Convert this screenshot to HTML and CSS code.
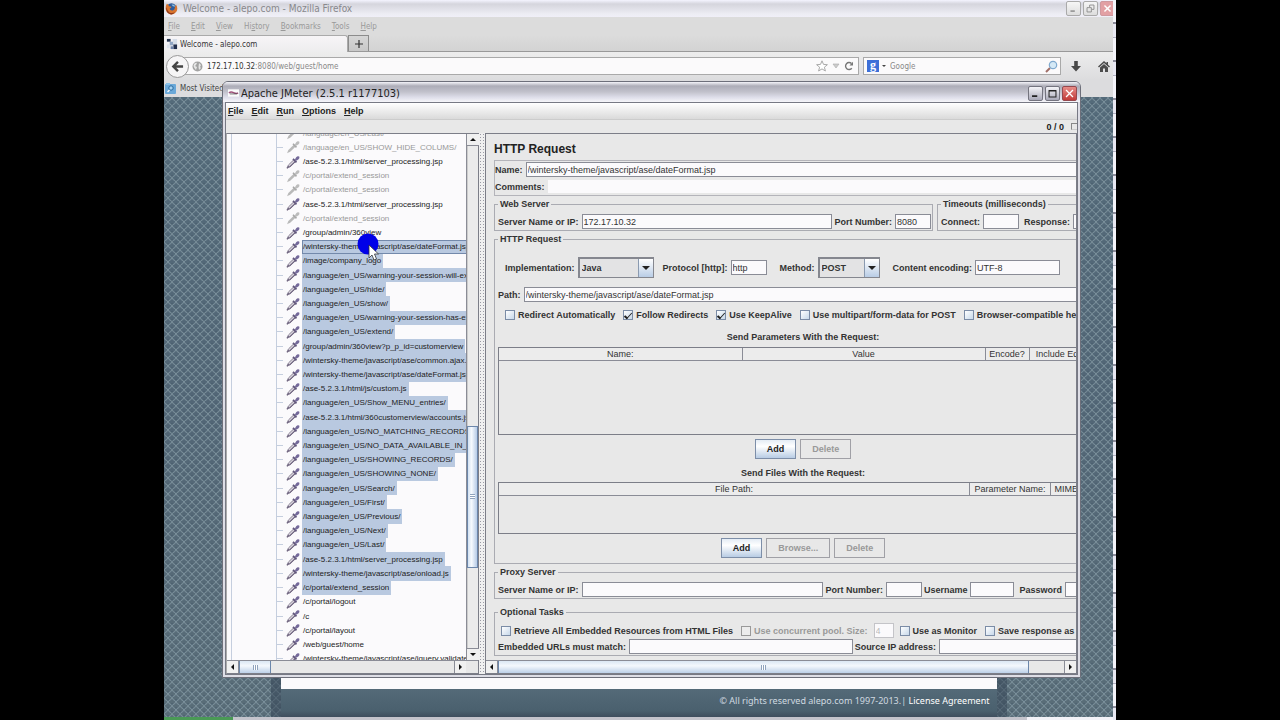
FILE: index.html
```html
<!DOCTYPE html>
<html lang="en">
<head>
<meta charset="utf-8">
<title>Apache JMeter (2.5.1 r1177103)</title>
<link rel="stylesheet" href="styles.css">
</head>
<body>
<svg class="defs" width="0" height="0" aria-hidden="true">
  <symbol id="dropper" viewBox="0 0 14 14">
    <path d="M1 13.2 2.4 10 7.8 4.8 9.6 6.5 4.2 11.8Z" fill="#d9d4dc" stroke="#8f8799" stroke-width="1"/>
    <path d="M1 13.2 3 11.2M3.6 11.9 9.4 6.4" stroke="#6f6580" stroke-width="1.1"/>
    <path d="M7 3.8 10.5 7.4" stroke="#61567c" stroke-width="1.8"/>
    <path d="M8.8 4.6 10.2 2.2Q11.6.6 13.2 1.6 14 3 12.6 4.3L10.4 5.8Z" fill="#74699a"/>
  </symbol>
  <symbol id="dropper-off" viewBox="0 0 14 14">
    <path d="M1 13.2 2.4 10 8 4.4 10 6.3 4.2 11.8Z" fill="#b9b9b9"/>
    <path d="M7 3.8 10.5 7.4" stroke="#a8a8a8" stroke-width="1.6"/>
    <path d="M8.8 4.6 10.2 2.2Q11.6.6 13.2 1.6 14 3 12.6 4.3L10.4 5.8Z" fill="#bcbcbc"/>
  </symbol>
</svg>
<main class="desktop">
  <section class="firefox">
    <header class="ff-title">
      <svg class="ff-logo" viewBox="0 0 14 14"><circle cx="7" cy="7" r="5.6" fill="#2f5c9c"/><path d="M7 3Q10 2 11 5 8 5 7 3Z" fill="#8fc0e0"/><path d="M2 2Q4 3 4.4 4.6L7 5Q6.6 6.6 5 7 5.4 9.6 8.4 9.2 11 8.6 10.6 5.4L12 3Q14.4 7 12.2 10.6 9.6 14 5.8 13.2 1.2 12 .7 7.4.6 4 2 2Z" fill="#d9742e"/><path d="M2 5Q1.6 9 4.6 11.2 8 13 11 10.6 8 15 4 12.4 0 9.6 2 5Z" fill="#8f3a1c"/></svg>
      <h1>Welcome - alepo.com - Mozilla Firefox</h1>
      <div class="win-buttons faded">
        <button aria-label="Minimize Firefox"><svg viewBox="0 0 15 15"><path d="M4 10.5h5" stroke="#999" stroke-width="2"/></svg></button>
        <button aria-label="Restore Firefox"><svg viewBox="0 0 15 15"><path d="M6.5 6V3.500h5v5h-2.500M3.500 6.500h5v5h-5z" fill="none" stroke="#888"/></svg></button>
        <button class="close" aria-label="Close Firefox"><svg viewBox="0 0 15 15"><path d="M4 4l7 7M11 4l-7 7" stroke="#fff" stroke-width="1.700"/></svg></button>
      </div>
    </header>
    <nav class="ff-menu"><a href="#"><u>F</u>ile</a><a href="#"><u>E</u>dit</a><a href="#"><u>V</u>iew</a><a href="#">Hi<u>s</u>tory</a><a href="#"><u>B</u>ookmarks</a><a href="#"><u>T</u>ools</a><a href="#"><u>H</u>elp</a></nav>
    <div class="ff-tabs">
      <div class="ff-tab"><svg class="site-icon" viewBox="0 0 13 13"><path d="M1 1h4v3H1z" fill="#24344f"/><path d="M4 4h4v4H4z" fill="#8fa5c4"/><path d="M7 1h5v6H8z" fill="#d5dde9"/><path d="M8 7h4v5H8z" fill="#1e2c4c"/><path d="M1 7h3v4H1z" fill="#dbe2ec"/><path d="M5 9h3v3H5z" fill="#6d83ab"/></svg>Welcome - alepo.com</div>
      <button class="ff-newtab" aria-label="New tab"><svg viewBox="0 0 8 8"><path d="M4 0v8M0 4h8" stroke="#333" stroke-width="1.200"/></svg></button>
    </div>
    <div class="ff-nav">
      <button class="ff-back" aria-label="Back"><svg viewBox="0 0 14 14"><path d="M13 7H3M7.500 2 2.500 7l5 5" fill="none" stroke="#444" stroke-width="2.600"/></svg></button>
      <div class="ff-url">
        <svg class="globe" viewBox="0 0 11 11"><circle cx="5.500" cy="5.500" r="5" fill="#a3a3a3"/><path d="M2 3q2-2 3-1l-1 2-1 1 2 1-1 3Q2 7 1.500 5zM7 2l2 2-1 2 1 1-2 2-.5-3z" fill="#e6e6e6"/></svg>
        <span class="url-text"><span>172.17.10.32</span>:8080/web/guest/home</span>
        <svg class="star" viewBox="0 0 12 12"><path d="M6 .8 7.500 4.400l3.900.3-3 2.500 1 3.800L6 8.900 2.600 11l1-3.800-3-2.500 3.900-.3z" fill="#fff" stroke="#aaa"/></svg>
        <svg class="down" viewBox="0 0 8 6"><path d="M1 1h6L4 5z" fill="#ccc" stroke="#aaa" stroke-width=".6"/></svg>
        <svg class="reload" viewBox="0 0 10 10"><path d="M7.800 7.200A3.500 3.500 0 1 1 7.500 2.500" fill="none" stroke="#777" stroke-width="1.400"/><path d="M5.500 4.500h3.500V.8z" fill="#777"/></svg>
      </div>
      <div class="ff-search">
        <span class="g-badge">g</span><span class="caret"></span>
        <input aria-label="Search with Google" placeholder="Google">
        <svg class="lens" viewBox="0 0 13 13"><path d="M1 12 5 8" stroke="#a06f68" stroke-width="2"/><circle cx="8" cy="5" r="3.700" fill="#d4e9f6" stroke="#7fa9cf" stroke-width="1.200"/></svg>
      </div>
      <svg class="download" viewBox="0 0 10 11"><path d="M3.200 0h3.600v5H10L5 10.500 0 5h3.200z" fill="#484848"/></svg>
      <svg class="home" viewBox="0 0 12 11"><path d="M6 0 0 5.600l1 .9L6 2l5 4.500 1-.9-2-1.900V1H8.500v1.300z" fill="#4c4c4c"/><path d="M2 6.500 6 3l4 3.500V11H7V7.500H5V11H2z" fill="#4c4c4c"/></svg>
    </div>
    <div class="ff-bookmarks"><svg viewBox="0 0 11 11"><rect x="0" y="1" width="11" height="10" rx="1" fill="#6aa8d8"/><path d="M1 0h4v2H1z" fill="#88c0e8"/><circle cx="6" cy="5" r="2.200" fill="#a8d4f2" stroke="#29689e"/><path d="M2.500 9 4.500 7" stroke="#fff" stroke-width="1.300"/></svg>Most Visited</div>
    <div class="ff-page">
      <svg class="scales" width="100%" height="100%" aria-hidden="true">
        <defs>
          <linearGradient id="tint" x1="0" y1="0" x2="0" y2="1"><stop offset="0" stop-color="#546b7a"/><stop offset=".5" stop-color="#526676"/><stop offset="1" stop-color="#596d78"/></linearGradient>
          <pattern id="scale" width="8" height="8" patternUnits="userSpaceOnUse"><path d="M0 0Q.5 3.500 4 4 7.500 3.500 8 0M-4 4Q-3.500 7.500 0 8 3.500 7.500 4 4 4.500 7.500 8 8" fill="none" stroke="#8297a2" stroke-width=".9"/><path d="M4 4V2M0 8V6M8 8V6" stroke="#465a6a"/></pattern>
        </defs>
        <rect width="100%" height="100%" fill="url(#tint)"/><rect width="100%" height="100%" fill="url(#scale)"/>
      </svg>
      <div class="page-shade">
        <footer class="page-footer">© All rights reserved alepo.com 1997-2013.| <a href="#">License Agreement</a></footer>
      </div>
    </div>
    <div class="taskbar"><span class="start"></span><span class="tasks"></span><span class="tray"></span></div>
  </section>
  <div class="edge"></div>

  <section class="jmeter">
    <header class="jm-title">
      <svg class="jm-logo" viewBox="0 0 12 8"><rect width="12" height="8" fill="#fafafa"/><path d="M1 4Q3 2 6 3.500T11 4" fill="none" stroke="#a0527c" stroke-width="1.600"/><path d="M2 5h8" stroke="#444" stroke-width=".8"/></svg>
      <h2>Apache JMeter (2.5.1 r1177103)</h2>
      <div class="win-buttons">
        <button aria-label="Minimize"><svg viewBox="0 0 15 15"><path d="M3.500 10.500h6" stroke="#222" stroke-width="2"/></svg></button>
        <button aria-label="Maximize"><svg viewBox="0 0 15 15"><path d="M3.500 4.500h8v7h-8zM3 4h9" fill="none" stroke="#222" stroke-width="1.200"/></svg></button>
        <button class="close" aria-label="Close"><svg viewBox="0 0 15 15"><path d="M3.500 3.500l8 8M11.500 3.500l-8 8" stroke="#fff" stroke-width="1.500"/></svg></button>
      </div>
    </header>
    <div class="jm-frame">
      <nav class="jm-menu"><a href="#"><u>F</u>ile</a><a href="#"><u>E</u>dit</a><a href="#"><u>R</u>un</a><a href="#"><u>O</u>ptions</a><a href="#"><u>H</u>elp</a></nav>
      <div class="jm-status"><span>0 / 0</span><span class="led"></span></div>
      <div class="jm-body">
        <aside class="tree-pane">
          <div class="tree-row">
            <div class="tree-view">
              <ul class="tree">
                <li class="off"><svg><use href="#dropper-off"/></svg><span>/language/en_US/Last/</span></li>
                <li class="off"><svg><use href="#dropper-off"/></svg><span>/language/en_US/SHOW_HIDE_COLUMS/</span></li>
                <li><svg><use href="#dropper"/></svg><span>/ase-5.2.3.1/html/server_processing.jsp</span></li>
                <li class="off"><svg><use href="#dropper-off"/></svg><span>/c/portal/extend_session</span></li>
                <li class="off"><svg><use href="#dropper-off"/></svg><span>/c/portal/extend_session</span></li>
                <li><svg><use href="#dropper"/></svg><span>/ase-5.2.3.1/html/server_processing.jsp</span></li>
                <li class="off"><svg><use href="#dropper-off"/></svg><span>/c/portal/extend_session</span></li>
                <li><svg><use href="#dropper"/></svg><span>/group/admin/360view</span></li>
                <li class="sel lead"><svg><use href="#dropper"/></svg><span>/wintersky-theme/javascript/ase/dateFormat.jsp</span></li>
                <li class="sel"><svg><use href="#dropper"/></svg><span>/image/company_logo</span></li>
                <li class="sel"><svg><use href="#dropper"/></svg><span>/language/en_US/warning-your-session-will-expire/</span></li>
                <li class="sel"><svg><use href="#dropper"/></svg><span>/language/en_US/hide/</span></li>
                <li class="sel"><svg><use href="#dropper"/></svg><span>/language/en_US/show/</span></li>
                <li class="sel"><svg><use href="#dropper"/></svg><span>/language/en_US/warning-your-session-has-expired/</span></li>
                <li class="sel"><svg><use href="#dropper"/></svg><span>/language/en_US/extend/</span></li>
                <li class="sel"><svg><use href="#dropper"/></svg><span>/group/admin/360view?p_p_id=customerview</span></li>
                <li class="sel"><svg><use href="#dropper"/></svg><span>/wintersky-theme/javascript/ase/common.ajax.js</span></li>
                <li class="sel"><svg><use href="#dropper"/></svg><span>/wintersky-theme/javascript/ase/dateFormat.jsp</span></li>
                <li class="sel"><svg><use href="#dropper"/></svg><span>/ase-5.2.3.1/html/js/custom.js</span></li>
                <li class="sel"><svg><use href="#dropper"/></svg><span>/language/en_US/Show_MENU_entries/</span></li>
                <li class="sel"><svg><use href="#dropper"/></svg><span>/ase-5.2.3.1/html/360customerview/accounts.jsp</span></li>
                <li class="sel"><svg><use href="#dropper"/></svg><span>/language/en_US/NO_MATCHING_RECORDS_FOUND/</span></li>
                <li class="sel"><svg><use href="#dropper"/></svg><span>/language/en_US/NO_DATA_AVAILABLE_IN_TABLE/</span></li>
                <li class="sel"><svg><use href="#dropper"/></svg><span>/language/en_US/SHOWING_RECORDS/</span></li>
                <li class="sel"><svg><use href="#dropper"/></svg><span>/language/en_US/SHOWING_NONE/</span></li>
                <li class="sel"><svg><use href="#dropper"/></svg><span>/language/en_US/Search/</span></li>
                <li class="sel"><svg><use href="#dropper"/></svg><span>/language/en_US/First/</span></li>
                <li class="sel"><svg><use href="#dropper"/></svg><span>/language/en_US/Previous/</span></li>
                <li class="sel"><svg><use href="#dropper"/></svg><span>/language/en_US/Next/</span></li>
                <li class="sel"><svg><use href="#dropper"/></svg><span>/language/en_US/Last/</span></li>
                <li class="sel"><svg><use href="#dropper"/></svg><span>/ase-5.2.3.1/html/server_processing.jsp</span></li>
                <li class="sel"><svg><use href="#dropper"/></svg><span>/wintersky-theme/javascript/ase/onload.js</span></li>
                <li class="sel"><svg><use href="#dropper"/></svg><span>/c/portal/extend_session</span></li>
                <li><svg><use href="#dropper"/></svg><span>/c/portal/logout</span></li>
                <li><svg><use href="#dropper"/></svg><span>/c</span></li>
                <li><svg><use href="#dropper"/></svg><span>/c/portal/layout</span></li>
                <li><svg><use href="#dropper"/></svg><span>/web/guest/home</span></li>
                <li><svg><use href="#dropper"/></svg><span>/wintersky-theme/javascript/ase/jquery.validate.js</span></li>
              </ul>
            </div>
            <div class="vscroll"><span class="arrow up"></span><span class="gap-above"></span><span class="thumb"></span><span class="gap-below"></span><span class="arrow dn"></span></div>
          </div>
          <div class="hscroll tree-h"><span class="arrow lt"></span><span class="thumb"></span><span class="rest"></span><span class="arrow rt"></span></div>
        </aside>
        <div class="splitter"></div>
        <div class="editor-pane">
          <div class="editor-view">
            <form class="editor">
              <h3>HTTP Request</h3>
              <div class="name-box">
                <div class="line"><label for="name">Name:</label><input id="name" class="grow" value="/wintersky-theme/javascript/ase/dateFormat.jsp"></div>
                <div class="line"><label for="comments">Comments:</label><input id="comments" class="grow plain"></div>
              </div>
              <div class="servers">
                <fieldset class="grow"><legend>Web Server</legend><div class="line">
                  <label for="host">Server Name or IP:</label><input id="host" class="grow" value="172.17.10.32"><label class="tight" for="port">Port Number:</label><input id="port" class="short" value="8080"></div>
                </fieldset>
                <fieldset><legend>Timeouts (milliseconds)</legend><div class="line">
                  <label for="connect">Connect:</label><input id="connect" class="short"><label class="next" for="response">Response:</label><input id="response" class="short"></div>
                </fieldset>
              </div>
              <fieldset class="request"><legend>HTTP Request</legend>
                <div class="line methods">
                  <label for="impl">Implementation:</label><div class="combo impl"><select id="impl"><option>Java</option></select><span class="drop"></span></div>
                  <label class="after" for="proto">Protocol [http]:</label><input id="proto" class="short" value="http">
                  <label class="far" for="method">Method:</label><div class="combo method"><select id="method"><option>POST</option></select><span class="drop"></span></div>
                  <label class="far" for="enc">Content encoding:</label><input id="enc" class="enc" value="UTF-8">
                </div>
                <div class="line path"><label for="path">Path:</label><input id="path" class="grow" value="/wintersky-theme/javascript/ase/dateFormat.jsp"></div>
                <div class="line checks">
                  <label><input type="checkbox">Redirect Automatically</label>
                  <label><input type="checkbox" checked>Follow Redirects</label>
                  <label><input type="checkbox" checked>Use KeepAlive</label>
                  <label><input type="checkbox">Use multipart/form-data for POST</label>
                  <label><input type="checkbox">Browser-compatible headers</label>
                </div>
                <p class="caption">Send Parameters With the Request:</p>
                <div class="table-box params"><table><colgroup><col class="c40"><col class="c40"><col class="c7"><col></colgroup><thead><tr><th>Name:</th><th>Value</th><th>Encode?</th><th>Include Equals?</th></tr></thead></table></div>
                <div class="buttons"><button type="button">Add</button><button type="button" disabled>Delete</button></div>
                <p class="caption">Send Files With the Request:</p>
                <div class="table-box files"><table><colgroup><col><col class="pname"><col class="mime"></colgroup><thead><tr><th>File Path:</th><th>Parameter Name:</th><th>MIME Type:</th></tr></thead></table></div>
                <div class="buttons"><button type="button">Add</button><button type="button" disabled>Browse...</button><button type="button" disabled>Delete</button></div>
              </fieldset>
              <fieldset class="proxy"><legend>Proxy Server</legend><div class="line">
                <label for="phost">Server Name or IP:</label><input id="phost" class="grow"><label class="tight" for="pport">Port Number:</label><input id="pport" class="short"><label class="tight" for="user">Username</label><input id="user" class="mid"><label class="next" for="pass">Password</label><input id="pass" class="mid"></div>
              </fieldset>
              <fieldset class="optional"><legend>Optional Tasks</legend>
                <div class="line checks">
                  <label><input type="checkbox">Retrieve All Embedded Resources from HTML Files</label>
                  <label class="dim"><input type="checkbox" disabled>Use concurrent pool. Size:</label><input class="pool" aria-label="Pool size" value="4" disabled>
                  <label><input type="checkbox">Use as Monitor</label>
                  <label><input type="checkbox">Save response as MD5 hash?</label>
                </div>
                <div class="line"><label for="embed">Embedded URLs must match:</label><input id="embed" class="grow"><label class="tight" for="source">Source IP address:</label><input id="source" class="source"></div>
              </fieldset>
            </form>
          </div>
          <div class="hscroll editor-h"><span class="arrow lt"></span><span class="thumb"></span><span class="rest"></span><span class="arrow rt"></span></div>
        </div>
      </div>
    </div>
  </section>
  <svg class="pointer" viewBox="0 0 24 28" aria-hidden="true"><circle cx="11" cy="11" r="10.500" fill="#0000e8"/><path d="M12 12v13l3-3 2 5 2.500-1-2-5h4z" fill="#fff" stroke="#333" stroke-width=".8"/></svg>
</main>
</body>
</html>
```
FILE: styles.css
```css
* { box-sizing: border-box; }
body { margin: 0; background: #000; font-family: "Liberation Sans", Arial, sans-serif; font-size: 9px; color: #222; }
button, input, select { font: inherit; color: inherit; margin: 0; padding: 0; }
a { color: inherit; text-decoration: none; }
h1, h2, h3, p { margin: 0; }
.defs { position: absolute; }
.desktop { position: relative; height: 100vh; min-height: 720px; margin: 0 164px; display: flex; overflow: hidden; }

/* Browser in the background */
.firefox { flex: 1; min-width: 0; display: flex; flex-direction: column; background: #dcdcdc; font-family: "DejaVu Sans Condensed", "DejaVu Sans", sans-serif; font-size: 8px; }
.ff-title { height: 17px; display: flex; align-items: center; gap: 5px; padding-left: 1px; overflow: hidden; background: linear-gradient(#f4f4ff, #d5d5dd 4px, #ededf4 14px, #f0eff8); color: #88888c; }
.ff-title h1 { flex: 1; font-size: 10px; font-weight: normal; }
.ff-logo { width: 13px; height: 13px; }
.win-buttons { display: flex; gap: 2px; }
.win-buttons button { width: 15px; height: 15px; border: 1px solid #74747f; border-radius: 2px; background: linear-gradient(#f4f4f8, #a9a9b8); display: flex; }
.win-buttons svg { width: 13px; height: 13px; }
.win-buttons .close { background: linear-gradient(#e78c88, #c23a38); border-color: #96484e; }
.win-buttons.faded { margin-right: -2px; }
.win-buttons.faded button { background: linear-gradient(#f6f6f6, #ddd); border-color: #aaa; }
.win-buttons.faded .close { background: #e2a0a4; border-color: #cf999f; }
.ff-menu { height: 18px; display: flex; align-items: center; gap: 11px; padding-left: 4px; color: #999; background: #dcdcdc; }
.ff-tabs { height: 17px; display: flex; background: linear-gradient(#dcdcdc, #d3d3d3); border-bottom: 1px solid #999; }
.ff-tab { width: 184px; height: 17px; display: flex; align-items: center; gap: 2px; padding-left: 2px; color: #333; background: linear-gradient(#f7f5f7, #ededee); border: 0 solid #aaa; border-width: 1px 1px 0 0; border-radius: 0 3px 0 0; }
.site-icon { width: 12px; height: 12px; }
.ff-newtab { width: 21px; border: 1px solid #8c8c8c; border-bottom: 0; background: linear-gradient(#d6d6d6, #c8c8c8); display: grid; place-items: center; }
.ff-newtab svg { width: 8px; height: 8px; }
.ff-nav { height: 28px; display: flex; align-items: center; padding: 0 3px 0 2px; background: linear-gradient(#ededed, #dcdcde); }
.ff-back { width: 23px; height: 23px; border: 1px solid #999; border-radius: 50%; background: #f6f5f6; display: grid; place-items: center; z-index: 1; }
.ff-back svg { width: 13px; height: 13px; }
.ff-url, .ff-search { height: 18px; display: flex; align-items: center; background: #fbfafb; border: 1px solid #a9a9a9; }
.ff-url { flex: 1; margin-left: -6px; padding: 0 4px 0 8px; }
.globe { width: 11px; height: 11px; }
.url-text { flex: 1; padding-left: 4px; color: #888; }
.url-text span { color: #333; }
.star { width: 12px; height: 12px; margin-right: 4px; }
.down { width: 8px; height: 6px; margin-right: 4px; }
.reload { width: 10px; height: 10px; }
.ff-search { width: 198px; margin-left: 4px; padding: 0 2px 0 3px; }
.g-badge { width: 12px; height: 12px; background: #3c6fd8; color: #fff; font: bold 12px/11px "Liberation Serif", serif; text-align: center; }
.caret { border: 2px solid transparent; border-top-color: #444; border-bottom: 0; margin: 0 4px 0 3px; }
.ff-search input { flex: 1; min-width: 0; border: 0; background: none; outline: 0; }
.ff-search input::placeholder { color: #888; opacity: 1; }
.lens { width: 13px; height: 13px; }
.download { width: 10px; height: 11px; margin: 0 17px 0 10px; }
.home { width: 12px; height: 11px; }
.ff-bookmarks { height: 17px; display: flex; align-items: center; gap: 4px; padding-left: 1px; color: #444; background: #dcdcde; }
.ff-bookmarks svg { width: 11px; height: 11px; }
.ff-page { flex: 1; display: grid; min-height: 0; }
.ff-page > * { grid-area: 1 / 1; }
.scales { display: block; }
.page-shade { justify-self: center; width: 736px; max-width: 100%; padding: 0 10px; background: rgba(50, 66, 84, .5); display: flex; flex-direction: column; justify-content: flex-end; z-index: 0; }
.page-shade::before { content: ""; flex: 1; background: #fbfafc; }
.page-footer { height: 28px; line-height: 24px; padding-right: 7px; text-align: right; color: #d0dae0; font-family: "Noto Sans", sans-serif; font-size: 9px; background: linear-gradient(#546a78, #4a606e 22px, #3f4e5e); }
.page-footer a { color: #fff; }
.taskbar { height: 3px; display: flex; background: #c4c4cc; }
.start { width: 69px; background: #4a9a55; }
.tasks { flex: 1; }
.tray { width: 86px; background: #f2f2f8; }
.edge { width: 3px; background: repeating-linear-gradient(#f4f4fa 0 22px, #8a8a98 22px 24px, #e8e8f2 24px 37px, #b0b0c0 37px 38px); }

/* JMeter window */
.jmeter { position: absolute; inset: 81px 35px 42px 58px; display: flex; flex-direction: column; border: 1px solid #6d6f7a; border-radius: 6px 6px 0 0; background: #dedee6; overflow: hidden; padding: 0 2px 2px; }
.jm-title { flex: none; height: 20px; margin: 0 -2px; padding: 2px 3px 0 5px; display: flex; align-items: center; gap: 2px; background: linear-gradient(#f4f4fa, #adadb8 4px, #c2c2cc 10px, #dcdce8 15px, #f6f6fa); }
.jm-title h2 { flex: 1; font-family: "DejaVu Sans Condensed", "DejaVu Sans", sans-serif; font-size: 11px; line-height: 13px; font-weight: normal; color: #222; }
.jm-logo { width: 11px; height: 8px; }
.jm-frame { flex: 1; min-height: 0; display: flex; flex-direction: column; border: 1px solid #777984; background: #e8e8e8; }
.jm-menu { height: 17px; display: flex; align-items: center; gap: 8px; padding-left: 2px; font-weight: bold; background: linear-gradient(#fff, #dadada); border-bottom: 1px solid #ccc; }
.jm-status { height: 13px; display: flex; align-items: center; justify-content: flex-end; gap: 7px; font-weight: bold; }
.led { width: 6px; height: 7px; border: 1px solid #888; border-right: 0; border-bottom-color: #ccc; }
.jm-body { flex: 1; min-height: 0; display: flex; }

.tree-pane { width: 253px; display: flex; flex-direction: column; border: 1px solid #7c7e88; border-left-color: #aaa; }
.tree-row { flex: 1; min-height: 0; display: flex; }
.tree-view { flex: 1; min-width: 0; display: flex; overflow: hidden; background: #fbfafc; padding-left: 4px; }
.tree { list-style: none; flex: 1; min-width: 0; margin: -8px 0 -6px; padding: 0 0 0 44px; display: flex; flex-direction: column; border-left: 1px solid #c5cede; font-size: 8px; color: #222; }
.tree li { flex: 1 1 0; min-height: 0; display: flex; align-items: center; border-left: 1px solid #c5cede; white-space: nowrap; }
.tree li::before { content: ""; flex: none; width: 6px; height: 1px; background: #c5cede; }
.tree svg { width: 14px; height: 14px; flex: none; margin: 0 2px 0 3px; overflow: visible; }
.tree span { flex: none; align-self: stretch; display: flex; align-items: center; padding: 0 2px 0 1px; }
.tree .off { color: #999; }
.tree .sel span { background: #b9c9e0; }
.tree .lead span { box-shadow: inset 0 0 0 1px #7389ab; }

.vscroll { width: 12px; display: flex; flex-direction: column; background: #ebebeb; border-left: 1px solid #8a8c96; }
.vscroll .gap-above { flex: 282; box-shadow: inset 1px 0 #ccc; }
.vscroll .gap-below { flex: 81; box-shadow: inset 1px 0 #ccc; }
.thumb { border: 1px solid #6c87ab; display: grid; place-items: center; }
.thumb::before { content: ""; width: 5px; height: 5px; }
.vscroll .thumb { flex: 141; background: linear-gradient(90deg, #d4e2f2, #f6fafe 40%, #b6cbe6); }
.vscroll .thumb::before { background: repeating-linear-gradient(#8fa3bd 0 1px, #fff 1px 2px); }
.arrow { width: 12px; height: 12px; display: grid; place-items: center; background: #f0f0f0; border: 0 solid #8a8c96; flex: none; }
.arrow::before { content: ""; border: 3px solid transparent; }
.up { border-bottom-width: 1px; }
.up::before { border-bottom-color: #111; border-top: 0; }
.dn { border-top-width: 1px; }
.dn::before { border-top-color: #111; border-bottom: 0; }
.lt { border-right-width: 1px; }
.lt::before { border-right-color: #111; border-left: 0; }
.rt { border-left-width: 1px; }
.rt::before { border-left-color: #111; border-right: 0; }
.hscroll { height: 13px; display: flex; align-items: stretch; background: #e8e8e8; border-top: 1px solid #8a8c96; flex: none; }
.hscroll .thumb { background: linear-gradient(#dbe7f4, #f4f8fd 40%, #bcd0e8); border-width: 0 1px; }
.hscroll .thumb::before { background: repeating-linear-gradient(90deg, #8fa3bd 0 1px, #fff 1px 2px); }
.hscroll .rest { flex: 1; }
.tree-h { padding-right: 12px; }
.tree-h .thumb { width: 32px; }
.editor-h .thumb { flex: 15; }

.splitter { width: 6px; background-color: #f0f0f0; background-image: radial-gradient(#9a9aa4 1px, transparent 1px); background-size: 3px 3px; }
.editor-pane { flex: 1; min-width: 0; display: flex; flex-direction: column; border: 1px solid #7c7e88; }
.editor-view { flex: 1; min-height: 0; display: flex; overflow: hidden; }
.editor { flex: none; width: calc(100% + 43px); padding: 8px 8px 4px; display: flex; flex-direction: column; font-weight: bold; color: #333; }
.editor h3 { font-size: 12px; line-height: 15px; color: #222; margin-bottom: 3px; }
.line { display: flex; align-items: center; gap: 3px; white-space: nowrap; }
.grow { flex: 1; min-width: 0; }
.editor input { height: 15px; padding: 0 1px; border: 1px solid #8a8c96; background: #fbfafc; font-weight: normal; color: #333; }
.name-box { border: 1px solid #b4b4ba; height: 36px; margin-bottom: 3px; display: grid; grid-template-rows: 17px 17px; }
.editor .plain { border: 0; height: 13px; }
.editor .short { width: 36px; }
.editor .mid { width: 44px; }
.editor .enc { width: 85px; }
.tight { margin-left: -1px; }
.next { margin-left: 2px; }
fieldset { margin: 0; min-width: 0; border: 1px solid #aaabb2; padding: 4px 1px 1px 3px; }
legend { line-height: 11px; padding: 0 2px; }
.servers { display: flex; gap: 4px; margin-bottom: 3px; }
.request { flex: 1; min-height: 0; padding: 0 2px 5px 3px; display: flex; flex-direction: column; margin-bottom: 3px; }
.methods { margin-top: 12px; padding-left: 7px; }
.after { margin-left: 6px; }
.far { margin-left: 10px; }
.combo { height: 21px; display: flex; border: 2px solid #85878f; border-right-width: 1px; border-bottom-width: 1px; background: #e3e3e4; }
.impl { width: 76px; }
.method { width: 62px; }
.combo select { flex: 1; min-width: 0; appearance: none; border: 0; background: none; padding: 0 2px; font-weight: bold; }
.drop { width: 15px; display: grid; place-items: center; border-left: 1px solid #8a9ab0; background: linear-gradient(#fff, #b9cde6); }
.drop::before { content: ""; border: 4px solid transparent; border-top-color: #222; border-bottom: 0; }
.path { margin-top: 9px; }
.checks { gap: 8px; margin-top: 8px; padding-left: 7px; }
.checks label { display: flex; align-items: center; gap: 3px; }
.editor input[type="checkbox"] { appearance: none; width: 10px; height: 10px; padding: 0; border: 1px solid #7b8ca6; background: linear-gradient(135deg, #fff, #c7d8ea); display: grid; place-items: center; }
.editor input[type="checkbox"]:checked::before { content: ""; width: 6px; height: 3px; border: solid #222; border-width: 0 0 1px 2px; rotate: -48deg; }
.editor input[type="checkbox"]:disabled { background: #ececec; border-color: #999; }
.dim { color: #999; }
.caption { text-align: center; line-height: 12px; }
.checks + .caption { margin-top: 11px; }
.table-box { border: 1px solid #7c7e88; }
.params { flex: 1; margin-top: 4px; }
.files { height: 52px; margin-top: 3px; }
table { width: 100%; table-layout: fixed; border-collapse: collapse; font-weight: normal; }
th { height: 12px; padding: 0; font-weight: normal; line-height: 10px; white-space: nowrap; background: #ececec; border: 0 solid #8a8c96; border-width: 0 1px 1px 0; }
.c40 { width: 40%; }
.c7 { width: 44px; }
.pname { width: 81px; }
.mime { width: 56px; }
.buttons { display: flex; justify-content: center; gap: 4px; padding: 4px 0; }
.files + .buttons { padding-bottom: 0; }
.params + .buttons { padding-bottom: 8px; }
.buttons button { height: 20px; padding: 0 11px; border: 1px solid #7d8ea8; background: linear-gradient(#e4ecf5, #fff 35%, #b8cce4); color: #222; }
.buttons button:disabled { border-color: #a0a0a6; background: #e8e8e8; color: #999; }
.proxy { margin-bottom: 8px; }
.optional { padding-top: 2px; }
.optional .line { margin-top: 1px; }
.optional .checks { padding-left: 3px; margin-top: 3px; }
.editor .pool { width: 20px; border-color: #c4c4c8; color: #bbb; margin: 0 -2px; }
.source { width: 170px; }

.pointer { position: absolute; left: 193px; top: 233px; width: 24px; height: 28px; }
```
